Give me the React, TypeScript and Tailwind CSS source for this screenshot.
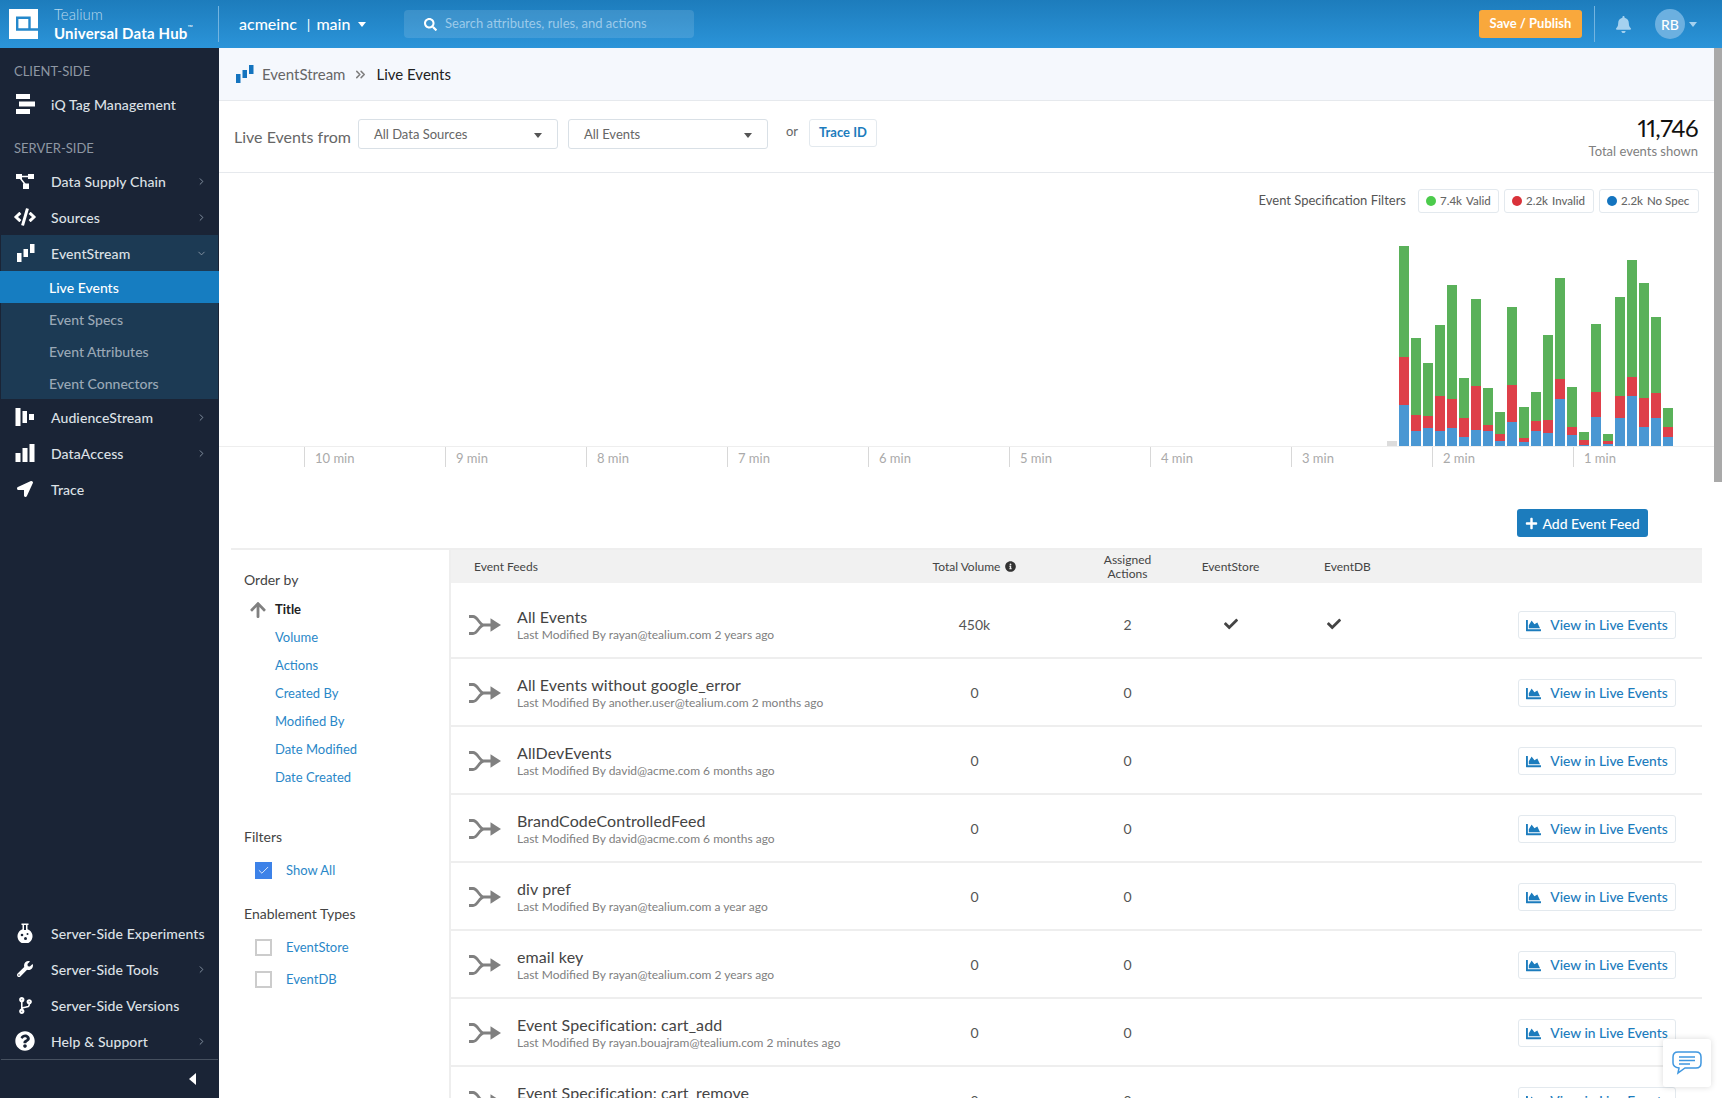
import type { ReactNode } from 'react';
import { Check, ChevronDown, ChevronRight, ChevronsRight } from 'lucide-react';
import {
  FaArrowUp,
  FaBell,
  FaChartArea,
  FaCheck,
  FaCode,
  FaCodeBranch,
  FaInfoCircle,
  FaLocationArrow,
  FaPlus,
  FaQuestionCircle,
  FaSearch,
  FaWrench,
} from 'react-icons/fa';

const font = 'font-["Lato","Liberation_Sans",sans-serif]';

// [green top, red top, blue top] measured from the chart, in 1/3 px above zero at y=648
const bars = [
  [48, 381, 525], [324, 555, 603], [399, 558, 594], [285, 498, 603], [165, 507, 594], [444, 564, 621],
  [207, 468, 600], [474, 585, 603], [546, 612, 633], [231, 465, 576], [531, 624, 636], [486, 573, 603],
  [315, 570, 609], [144, 447, 507], [471, 591, 615], [606, 630, 645], [282, 486, 561], [612, 633, 642],
  [201, 498, 564], [90, 441, 498], [159, 504, 591], [261, 489, 564], [534, 591, 621],
];

const ticks = ['10 min', '9 min', '8 min', '7 min', '6 min', '5 min', '4 min', '3 min', '2 min', '1 min'];

const feeds = [
  { name: 'All Events', sub: 'Last Modified By rayan@tealium.com 2 years ago', volume: '450k', actions: '2', on: true },
  { name: 'All Events without google_error', sub: 'Last Modified By another.user@tealium.com 2 months ago', volume: '0', actions: '0' },
  { name: 'AllDevEvents', sub: 'Last Modified By david@acme.com 6 months ago', volume: '0', actions: '0' },
  { name: 'BrandCodeControlledFeed', sub: 'Last Modified By david@acme.com 6 months ago', volume: '0', actions: '0' },
  { name: 'div pref', sub: 'Last Modified By rayan@tealium.com a year ago', volume: '0', actions: '0' },
  { name: 'email key', sub: 'Last Modified By rayan@tealium.com 2 years ago', volume: '0', actions: '0' },
  { name: 'Event Specification: cart_add', sub: 'Last Modified By rayan.bouajram@tealium.com 2 minutes ago', volume: '0', actions: '0' },
  { name: 'Event Specification: cart_remove', sub: 'Last Modified By rayan.bouajram@tealium.com 2 minutes ago', volume: '0', actions: '0' },
];

function Logo() {
  return (
    <svg width="29" height="30" viewBox="0 0 29 30">
      <rect width="29" height="30" fill="white" />
      <path d="M8.200 8.800h12.300v11.700H8.200zM20.500 20.500H29" fill="none" stroke="#2488cb" strokeWidth="2.400" />
    </svg>
  );
}

function StreamIcon({ className = 'fill-white' }: { className?: string }) {
  return (
    <svg width="20" height="20" viewBox="0 0 20 20" className={className}>
      <rect x="1" y="10" width="4.500" height="9" />
      <rect x="7.500" y="6" width="4.500" height="8" />
      <rect x="14" y="1" width="4.500" height="9" />
    </svg>
  );
}

function TagIcon() {
  return (
    <svg width="20" height="20" viewBox="0 0 20 20" fill="white">
      <rect x="1" y="0" width="14" height="5" />
      <rect x="4" y="7.500" width="16" height="5" />
      <rect x="1" y="15" width="14" height="5" />
    </svg>
  );
}

function SupplyIcon() {
  return (
    <svg width="20" height="20" viewBox="0 0 20 20" fill="white" stroke="white">
      <rect x="1" y="3" width="6" height="5" strokeWidth="0" />
      <rect x="13" y="3" width="6" height="5" strokeWidth="0" />
      <rect x="8" y="12.500" width="6" height="5.500" strokeWidth="0" />
      <path d="M4 5.500h12M4 5.500l7 9" strokeWidth="1.500" fill="none" />
    </svg>
  );
}

function AudienceIcon() {
  return (
    <svg width="20" height="20" viewBox="0 0 20 20" fill="white">
      <rect x="0.500" y="1" width="5" height="18" />
      <rect x="7.500" y="4" width="4.500" height="12" />
      <rect x="14" y="7" width="5" height="6" />
    </svg>
  );
}

function AccessIcon() {
  return (
    <svg width="20" height="20" viewBox="0 0 20 20" fill="white">
      <rect x="0.500" y="10" width="5" height="9" />
      <rect x="7.500" y="5" width="5" height="14" />
      <rect x="14.500" y="1" width="5" height="18" />
    </svg>
  );
}

function FlaskIcon() {
  return (
    <svg width="16" height="20" viewBox="0 0 16 20">
      <path d="M4.500 .5h7v1.500h-1v4.200A7.500 7.500 0 1 1 5.500 6.200V2h-1z" fill="white" />
      <path d="M7 2h2v5H7z" fill="#1a2436" />
      <circle cx="5" cy="12" r="1.300" fill="#1a2436" />
      <circle cx="10.500" cy="11" r="1" fill="#1a2436" />
      <circle cx="8.500" cy="15.500" r="1.500" fill="#1a2436" />
    </svg>
  );
}

function MergeIcon() {
  return (
    <svg width="32" height="20" viewBox="0 0 32 20" className="mt-[2px] shrink-0 text-[#808080]" fill="none">
      <path d="M0 1.500h4c5 0 6 8.500 11 8.500h8M0 18.500h4c5 0 6-8.500 11-8.500" stroke="currentColor" strokeWidth="2.800" />
      <path d="M21.500 3.300L32 10l-10.500 6.700z" fill="currentColor" />
    </svg>
  );
}

function Caret({ className }: { className: string }) {
  return <span className={`inline-block h-0 w-0 border-x-[4px] border-t-[5px] border-x-transparent ${className}`} />;
}

function SideItem({ icon, label, chevron, active }: { icon: ReactNode; label: string; chevron?: boolean; active?: boolean }) {
  return (
    <div className={`flex h-9 items-center text-[14px] font-medium tracking-[0.1px] text-[#dde1e6] ${active ? 'mx-px bg-[#1c3a54] pr-[11px]' : 'pr-[12px]'}`}>
      <span className={`flex shrink-0 justify-center pr-[1px] text-white ${active ? 'w-[50px]' : 'w-[51px]'}`}>{icon}</span>
      <span className="grow whitespace-nowrap">{label}</span>
      {active ? <ChevronDown size={11} className="text-[#8a97a6]" /> : chevron && <ChevronRight size={11} className="text-[#8a97a6]" />}
    </div>
  );
}

function SubItem({ label, active }: { label: string; active?: boolean }) {
  return (
    <div className={`flex h-8 items-center text-[14px] ${active ? '-mx-px bg-[#167dc1] pl-[49px] font-medium text-white' : 'pl-[48px] font-medium text-[#9aa8b6]'}`}>
      {label}
    </div>
  );
}

function Sidebar() {
  return (
    <aside className="flex w-[219px] shrink-0 flex-col bg-[#1a2436]">
      <div className="flex h-[38px] items-center pt-[10px] pl-[14px] text-[13px] text-[#8e97a3]">CLIENT-SIDE</div>
      <SideItem icon={<TagIcon />} label="iQ Tag Management" />
      <div className="flex h-[41px] items-center pt-[13px] pl-[14px] text-[13px] text-[#8e97a3]">SERVER-SIDE</div>
      <SideItem icon={<SupplyIcon />} label="Data Supply Chain" chevron />
      <SideItem icon={<FaCode size={22} />} label="Sources" chevron />
      <SideItem icon={<StreamIcon />} label="EventStream" active />
      <div className="mx-px bg-[#1c3a54]">
        <SubItem label="Live Events" active />
        <SubItem label="Event Specs" />
        <SubItem label="Event Attributes" />
        <SubItem label="Event Connectors" />
      </div>
      <SideItem icon={<AudienceIcon />} label="AudienceStream" chevron />
      <SideItem icon={<AccessIcon />} label="DataAccess" chevron />
      <SideItem icon={<FaLocationArrow size={16} />} label="Trace" />
      <div className="mt-auto">
        <SideItem icon={<FlaskIcon />} label="Server-Side Experiments" />
        <SideItem icon={<FaWrench size={16} />} label="Server-Side Tools" chevron />
        <SideItem icon={<FaCodeBranch size={17} />} label="Server-Side Versions" />
        <SideItem icon={<FaQuestionCircle size={20} />} label="Help & Support" chevron />
        <div className="mx-px flex h-[39px] items-center justify-end border-t border-[#46505f] pr-[22px]">
          <span className="h-0 w-0 border-y-[6px] border-r-[7px] border-y-transparent border-r-white" />
        </div>
      </div>
    </aside>
  );
}

function Header() {
  return (
    <header className="flex h-12 shrink-0 items-center bg-gradient-to-b from-[#1d7cbc] to-[#2b94d9] text-white">
      <div className="flex w-[218px] shrink-0 items-center pl-[9px]">
        <Logo />
        <div className="ml-[16px] text-[15px] leading-[19px] whitespace-nowrap">
          <div className="font-light text-[#b7d9ee]">Tealium</div>
          <div className="font-bold tracking-[0.2px]">
            Universal Data Hub<span className="align-top text-[7px] leading-none font-normal">™</span>
          </div>
        </div>
      </div>
      <div className="h-9 w-px bg-[#73b4e0]" />
      <div className="ml-5 flex w-[165px] items-center text-[16px] font-medium whitespace-nowrap">
        acmeinc
        <span className="mr-[6px] ml-[10px] text-[14px] font-normal">|</span>
        main
        <Caret className="ml-[8px] border-t-white" />
      </div>
      <div className="flex h-7 w-[290px] items-center rounded-[4px] bg-white/12 pl-5 text-[13px] text-[#9ccaea]">
        <FaSearch size={13} className="mr-[8px] text-white" />
        Search attributes, rules, and actions
      </div>
      <div className="ml-auto flex h-7 w-[103px] items-center justify-center rounded-[3px] bg-[#f9a83c] text-[13px] font-bold">Save / Publish</div>
      <div className="mx-3 h-9 w-px bg-[#73b4e0]" />
      <FaBell size={17} className="ml-[8px] text-[#a5d1ef]" />
      <div className="ml-[23px] flex h-[30px] w-[30px] items-center justify-center rounded-full bg-[#6cb0e0] text-[14px] font-medium">RB</div>
      <Caret className="mr-[25px] ml-[4px] border-t-[#a5d1ef]" />
    </header>
  );
}

function Select({ label }: { label: string }) {
  return (
    <div className="flex h-[30px] w-[200px] items-center justify-between rounded-[3px] border border-[#d9e0e6] px-[15px] pt-[2px] text-[13px] text-[#666]">
      {label}
      <Caret className="mt-[2px] border-t-[#555]" />
    </div>
  );
}

function Chip({ dot, value, label, width }: { dot: string; value: string; label: string; width: string }) {
  return (
    <div className={`flex h-6 items-center rounded-[3px] border border-[#e3e9ee] pl-[7px] text-[11.5px] font-medium whitespace-nowrap text-[#666] ${width}`}>
      <span className={`mr-[4px] h-[10px] w-[10px] rounded-full ${dot}`} />
      <span className="mr-[4px]">{value}</span>
      {label}
    </div>
  );
}

function Chart() {
  return (
    <div className="flex flex-col">
      <div className="flex h-[40px] items-end justify-end gap-[5px] pr-[23px]">
        <span className="mr-[7px] self-center pt-[16px] text-[13px] text-[#555]">Event Specification Filters</span>
        <Chip dot="bg-[#4ccb4c]" value="7.4k" label="Valid" width="w-[81px]" />
        <Chip dot="bg-[#d9323a]" value="2.2k" label="Invalid" width="w-[90px]" />
        <Chip dot="bg-[#1474bf]" value="2.2k" label="No Spec" width="w-[100px]" />
      </div>
      <div className="flex h-[234px] items-end justify-end gap-[2px] border-b border-[#eeeeee] pr-[49px]">
        <div className="h-[5px] w-[10px] bg-[#dcdcdc]" />
        {bars.map(([g, r, b], i) => (
          <div key={i} className="flex w-[10px] flex-col">
            <div className="bg-[#5ab15a]" style={{ height: (r - g) / 3 }} />
            <div className="bg-[#de4049]" style={{ height: (b - r) / 3 }} />
            <div className="bg-[#4a97d3]" style={{ height: (648 - b) / 3 }} />
          </div>
        ))}
      </div>
      <div className="flex pl-[85px]">
        {ticks.map((t) => (
          <div key={t} className="flex h-5 w-[141px] shrink-0 items-center border-l border-[#d8d8d8] pt-[4px] pl-[10px] text-[13px] whitespace-nowrap text-[#aaaaaa]">
            {t}
          </div>
        ))}
      </div>
    </div>
  );
}

function OrderPanel() {
  const order = ['Volume', 'Actions', 'Created By', 'Modified By', 'Date Modified', 'Date Created'];
  return (
    <div className="w-[220px] shrink-0 border-r-2 border-[#eeeeee] pl-[13px]">
      <div className="mt-[21px] text-[14px] leading-[18px] text-[#444]">Order by</div>
      <div className="mt-[12px] flex h-[18px] items-center text-[13px] font-bold text-[#222]">
        <FaArrowUp size={18} className="mr-[8px] ml-[5px] text-[#808080]" />
        Title
      </div>
      <div className="mt-[1px] ml-[31px] flex flex-col">
        {order.map((o) => (
          <div key={o} className="flex h-7 items-center pt-[7px] text-[13px] leading-none text-[#2a87c8]">
            {o}
          </div>
        ))}
      </div>
      <div className="mt-[40px] text-[14px] leading-[18px] text-[#444]">Filters</div>
      <label className="mt-[16px] flex h-[17px] items-center pl-[11px] text-[13px] text-[#2a87c8]">
        <span className="mr-[14px] flex h-[17px] w-[17px] items-center justify-center bg-[#3d82e8]">
          <Check size={13} strokeWidth={1.5} className="text-white" />
        </span>
        Show All
      </label>
      <div className="mt-[26px] text-[14px] leading-[18px] text-[#444]">Enablement Types</div>
      <label className="mt-[16px] flex h-[17px] items-center pl-[11px] text-[13px] text-[#2a87c8]">
        <span className="mr-[14px] h-[17px] w-[17px] border-2 border-[#cccccc]" />
        EventStore
      </label>
      <label className="mt-[15px] flex h-[17px] items-center pl-[11px] text-[13px] text-[#2a87c8]">
        <span className="mr-[14px] h-[17px] w-[17px] border-2 border-[#cccccc]" />
        EventDB
      </label>
    </div>
  );
}

function FeedTable() {
  const cols = 'grid grid-cols-[422px_203px_103px_103px_103px_1fr] items-center';
  return (
    <div className="grow">
      <div className={`${cols} h-[33px] bg-[#f1f1f1] text-[12px] text-[#444]`}>
        <div className="pl-[23px]">Event Feeds</div>
        <div className="flex items-center justify-center gap-[5px]">
          Total Volume <FaInfoCircle size={11} className="text-[#333]" />
        </div>
        <div className="text-center leading-[14px]">
          Assigned
          <br />
          Actions
        </div>
        <div className="text-center">EventStore</div>
        <div className="pl-[42px]">EventDB</div>
      </div>
      <div className="pt-[8px]">
        {feeds.map((f) => (
          <div key={f.name} className={`${cols} h-[68px] border-b-2 border-[#eeeeee]`}>
            <div className="flex items-center pl-[18px]">
              <MergeIcon />
              <div className="ml-[16px] whitespace-nowrap">
                <div className="text-[16px] leading-[20px] tracking-[0.1px] text-[#444]">{f.name}</div>
                <div className="mt-[1px] text-[12px] leading-[14px] text-[#808080]">{f.sub}</div>
              </div>
            </div>
            <div className="text-center text-[14px] text-[#555]">{f.volume}</div>
            <div className="text-center text-[14px] text-[#555]">{f.actions}</div>
            <div className="flex justify-center">{f.on && <FaCheck size={14} className="text-[#444]" />}</div>
            <div className="flex justify-center">{f.on && <FaCheck size={14} className="text-[#444]" />}</div>
            <div className="mt-[2px] flex justify-end pr-[26px]">
              <div className="flex h-7 w-[158px] items-center justify-center gap-[9px] rounded-[3px] border border-[#e3e9ee] text-[13.8px] font-medium whitespace-nowrap text-[#1c7cbd]">
                <FaChartArea size={15} />
                View in Live Events
              </div>
            </div>
          </div>
        ))}
      </div>
    </div>
  );
}

export default function App() {
  return (
    <div className={`flex h-screen flex-col overflow-hidden bg-white ${font}`}>
      <Header />
      <div className="flex min-h-0 grow">
        <Sidebar />
        <main className="relative min-w-0 grow overflow-hidden">
          {/* breadcrumb */}
          <div className="flex h-[53px] items-center border-b border-[#e6e9ed] bg-[#f5f8fd] pl-[16px] text-[15px]">
            <StreamIcon className="fill-[#1474bf]" />
            <span className="ml-[7px] text-[#666]">EventStream</span>
            <ChevronsRight size={15} strokeWidth={2.5} className="mx-[8px] text-[#808080]" />
            <span className="text-[#222]">Live Events</span>
          </div>

          {/* source filters */}
          <div className="flex h-[72px] items-center border-b border-[#e6e9ed] pr-[24px] pl-[15px]">
            <span className="mr-[7px] text-[16px] text-[#666]">Live Events from</span>
            <div className="-mt-[6px] flex items-center gap-[10px]">
              <Select label="All Data Sources" />
              <Select label="All Events" />
            </div>
            <span className="mr-[11px] ml-[18px] -mt-[10px] text-[13px] text-[#666]">or</span>
            <div className="-mt-[8px] flex h-7 w-[68px] items-center justify-center rounded-[3px] border border-[#e3e9ee] text-[13px] font-bold text-[#1c7cbd]">Trace ID</div>
            <div className="ml-auto text-right">
              <div className="text-[24px] leading-[28px] tracking-[-0.6px] text-[#111] proportional-nums">11,746</div>
              <div className="text-[13px] leading-[18px] text-[#808080]">Total events shown</div>
            </div>
          </div>

          <Chart />

          <div className="mt-[42px] flex justify-end pr-[74px]">
            <div className="flex h-7 w-[131px] items-center justify-center gap-[4px] rounded-[3px] bg-[#1c7cbd] text-[14px] font-medium text-white">
              <FaPlus size={13} />
              Add Event Feed
            </div>
          </div>

          <div className="mt-[11px] mr-[20px] ml-[12px] flex border-t-2 border-[#eeeeee]">
            <OrderPanel />
            <FeedTable />
          </div>

          {/* page scrollbar thumb */}
          <div className="absolute top-0 right-0 h-[434px] w-[8px] bg-[#a9a9a9]" />

          {/* chat widget */}
          <div className="absolute top-[991px] right-[11px] flex h-[48px] w-[48px] items-center justify-center rounded-[3px] bg-white shadow-[0_0_6px_rgba(0,0,0,0.15)]">
            <svg width="30" height="24" viewBox="0 0 30 24" fill="none" stroke="#3f97e0" strokeWidth="1.500">
              <path d="M6 1h18c3 0 5 2 5 5v6c0 3-2 5-5 5H13l-7 5 1-5c-3-.5-6-2-6-5V6c0-3 2-5 5-5z" />
              <path d="M7 6h16M7 9.500h16M7 13h11" />
            </svg>
          </div>
        </main>
      </div>
    </div>
  );
}
